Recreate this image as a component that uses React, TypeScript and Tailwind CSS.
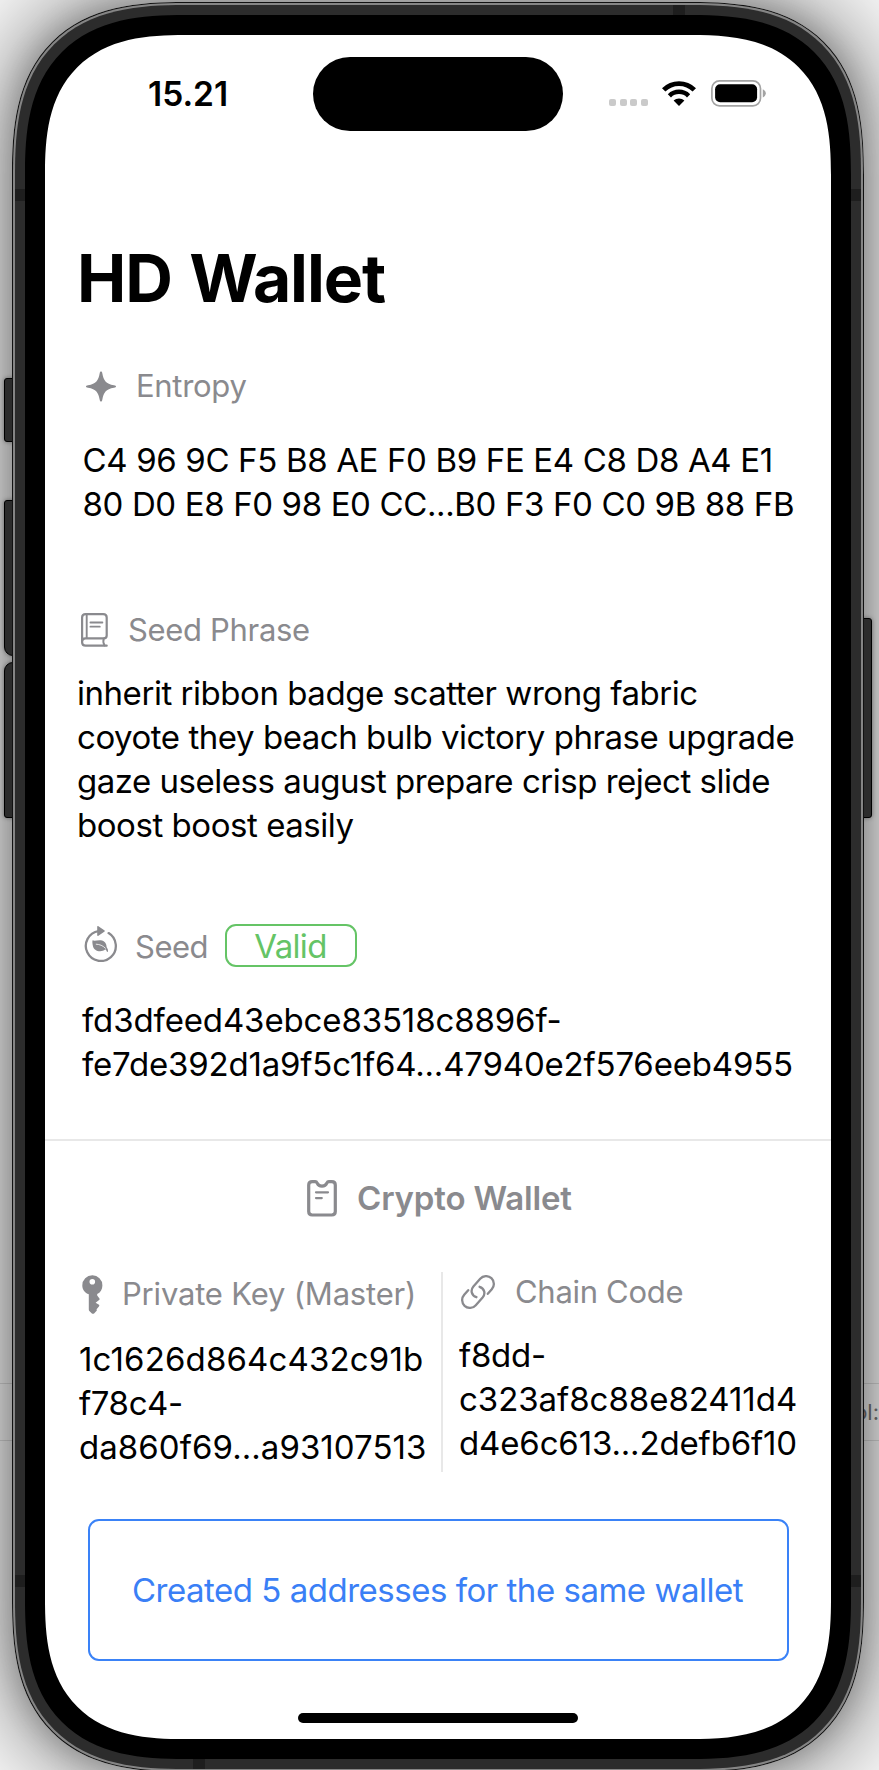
import type { ReactNode } from "react";

function Line({ children, track }: { children: ReactNode; track: string }) {
  return <span className={`block whitespace-nowrap ${track}`}>{children}</span>;
}

function SparkleIcon() {
  return (
    <svg className="h-[31px] w-[30px] shrink-0" viewBox="0 0 30 31" fill="currentColor">
      <path d="M15 0.4C15.8 0.4 16.1 1 16.3 2.2C17.6 9.2 19.8 12.9 28 14.2C29.4 14.5 30 14.8 30 15.5C30 16.2 29.4 16.6 28 16.8C19.8 18.1 17.6 21.8 16.3 28.8C16.1 30 15.8 30.6 15 30.6C14.2 30.6 13.9 30 13.7 28.8C12.4 21.8 10.2 18.1 2 16.8C0.6 16.6 0 16.2 0 15.5C0 14.8 0.6 14.5 2 14.2C10.2 12.9 12.4 9.2 13.7 2.2C13.9 1 14.2 0.4 15 0.4Z" />
    </svg>
  );
}

function BookIcon() {
  return (
    <svg className="h-[34px] w-[27px] shrink-0" viewBox="0 0 27 34" fill="none" stroke="currentColor" strokeWidth="2.2" strokeLinecap="round" strokeLinejoin="round">
      <path d="M1.1 29.2V4.6C1.1 2.2 2.3 1.1 4.6 1.1H22.2C24.6 1.1 25.7 2.2 25.7 4.6V22.6C25.7 24.6 24.8 25.4 22.8 25.4H4.6C2.4 25.4 1.1 26.6 1.1 29.2C1.1 31.6 2.4 32.7 4.6 32.7H25.7" />
      <path d="M5.7 1.4V25M22.8 25.6C22 27.8 22.2 30.2 23.6 32.4" strokeWidth="1.9" />
      <path d="M9.4 9.5H21.4M9.4 13.7H18.8" strokeWidth="1.8" />
    </svg>
  );
}

function SeedIcon() {
  return (
    <svg className="h-[36px] w-[33px] shrink-0" viewBox="0 0 33 36" fill="none">
      <path d="M24.6 7.1A15 15 0 1 1 14.6 5.1" stroke="currentColor" strokeWidth="2.3" strokeLinecap="round" />
      <path d="M13.2 0.8C13.2 0 13.8 -0.1 14.4 0.3L20.3 4.3C20.9 4.7 20.9 5.4 20.3 5.8L14.4 9.8C13.8 10.2 13.2 9.9 13.2 9.2Z" fill="currentColor" />
      <path d="M8.6 14.2C10.4 15.4 13.4 13.9 16.7 14.3C20.7 14.8 22.5 17.6 22.6 21.1C22.9 22.2 24.3 23.2 24 25.2C23.8 26.2 23 26.2 22.7 25.3C22.3 24.2 21.8 23.6 21.2 23.6C17.6 26.4 9.6 26 8.7 18.9C8.5 17.4 8.1 15.7 8.6 14.2Z" fill="currentColor" />
      <path d="M12.2 18.2C15.8 18.4 18.6 19.4 21.4 22.2" stroke="#fff" strokeWidth="0.8" strokeLinecap="round" />
    </svg>
  );
}

function WalletPassIcon() {
  return (
    <svg className="h-[37px] w-[30px] shrink-0" viewBox="0 0 30 37" fill="none" stroke="currentColor" strokeLinecap="round" strokeLinejoin="round">
      <path d="M5.2 1.7H8.2C9.4 1.7 9.8 2.3 10.2 3.1C11 5 12.6 6.2 15 6.2C17.4 6.2 19 5 19.8 3.1C20.2 2.3 20.6 1.7 21.8 1.7H24.8C27.2 1.7 28.3 2.8 28.3 5V31.6C28.3 33.8 27.2 35 24.8 35H5.2C2.8 35 1.7 33.8 1.7 31.6V5C1.7 2.8 2.8 1.7 5.2 1.7Z" strokeWidth="3.2" />
      <path d="M9 12.3H21M9 18.1H14.8" strokeWidth="2.2" />
    </svg>
  );
}

function KeyIcon() {
  return (
    <svg className="h-[39px] w-[21px] shrink-0" viewBox="0 0 21 39" fill="currentColor">
      <path fillRule="evenodd" d="M10.3 0.3A10 10 0 0 1 20.4 10.4C20.4 14.4 18.4 17.4 15.2 19.1L15.2 20.4L17.3 23.2C17.8 23.9 17.7 24.5 17.1 25.1L13.6 27.8L17 29.8C17.5 30.4 17.4 31 16.9 31.6L14.6 34.2L14.8 35.2C14.8 35.6 14.7 35.8 14.4 36.1L12.1 38.5C11.4 39 10.6 39 9.9 38.4L7.6 36.2C7 35.7 6.8 35.2 6.8 34.4V19.3C3 17.8 0.3 14.6 0.3 10.4A10 10 0 0 1 10.3 0.3ZM10.3 4A2.8 2.8 0 1 0 10.3 9.6A2.8 2.8 0 1 0 10.3 4Z" />
    </svg>
  );
}

function LinkIcon() {
  return (
    <svg className="h-[34px] w-[34px] shrink-0" viewBox="0 0 34 34" fill="none" stroke="currentColor" strokeWidth="2.3" strokeLinecap="round">
      <path d="M15.4 22.2C10.4 20.6 9.2 15.2 12.4 11.4L19.2 3.8C22.2 0.4 27.2 0.3 30.4 3.2C33.6 6.3 33.6 11 30.8 14.2L26.8 18.8" />
      <path d="M18.6 11.8C23.6 13.4 24.8 18.8 21.6 22.6L14.8 30.2C11.8 33.6 6.8 33.7 3.6 30.8C0.4 27.7 0.4 23 3.2 19.8L7.2 15.2" />
    </svg>
  );
}

function WifiIcon() {
  return (
    <svg className="mt-[24px] ml-[14px] h-[25px] w-[34px] shrink-0" viewBox="0 0 34 25" fill="none" stroke="#000">
      <path d="M1.7 8.9A21.7 21.7 0 0 1 32.3 8.9" strokeWidth="4.8" />
      <path d="M7.4 14.8A13.6 13.6 0 0 1 26.6 14.8" strokeWidth="4.5" />
      <path d="M17 25L11.6 19.5C14.6 16.7 19.4 16.7 22.4 19.5Z" fill="#000" stroke="none" />
    </svg>
  );
}

function BatteryIcon() {
  return (
    <svg className="mt-[23px] ml-[15px] h-[27px] w-[55px] shrink-0" viewBox="0 0 55 27">
      <rect x="0.9" y="0.9" width="48.6" height="25" rx="7.6" fill="none" stroke="#a3a3a3" strokeWidth="1.7" />
      <rect x="4.1" y="4.2" width="42" height="18" rx="5" fill="#000" />
      <path d="M51.8 9.2C53.6 9.9 54.8 11.5 54.8 13.3C54.8 15.1 53.6 16.8 51.8 17.5Z" fill="#a3a3a3" />
    </svg>
  );
}

const sideButton = "absolute border border-black bg-[#2c2c2c] shadow-[0_0_4px_rgba(0,0,0,0.4)]";

export default function App() {
  return (
    <div className="relative h-[1770px] w-[879px] overflow-hidden bg-[#fafafa] font-['Inter','Liberation_Sans',sans-serif] text-[33px] leading-[44px] text-black">
      <div className="absolute top-[1383px] left-0 flex h-[58px] w-full items-center justify-end border-y border-[#dcdcdc]">
        <span className="text-[22px] leading-[28px] text-[#777]">ol:</span>
      </div>
      <div className="absolute top-[2px] left-[12px] h-[1770px] w-[852px] rounded-[173px] shadow-[0_0_90px_16px_rgba(0,0,0,0.44),0_0_30px_2px_rgba(0,0,0,0.22)] [corner-shape:superellipse(1.4)]" />
      <div className={`${sideButton} top-[378px] left-[4px] h-[64px] w-[12px] rounded-l-[3px]`} />
      <div className={`${sideButton} top-[500px] left-[4px] h-[156px] w-[12px] rounded-tl-[3px] rounded-bl-[9px]`} />
      <div className={`${sideButton} top-[662px] left-[4px] h-[156px] w-[12px] rounded-tl-[9px] rounded-bl-[3px]`} />
      <div className={`${sideButton} top-[618px] left-[861px] h-[200px] w-[11px] rounded-r-[3px]`} />

      <div className="absolute top-[2px] left-[12px] h-[1770px] w-[852px] rounded-[173px] bg-[#111] p-px [corner-shape:superellipse(1.4)]">
        <div className="h-full rounded-[172px] bg-[#858585] p-[2px] [corner-shape:superellipse(1.4)]">
          <div className="relative h-full overflow-hidden rounded-[170px] bg-[#2c2c2c] p-[10px] [corner-shape:superellipse(1.4)]">
            <div className="absolute top-[184px] left-0 h-[12px] w-full bg-[#1e1e1e]" />
            <div className="absolute top-[1570px] left-0 h-[12px] w-full bg-[#1e1e1e]" />
            <div className="absolute top-0 left-[658px] h-[12px] w-[12px] bg-[#1e1e1e]" />
            <div className="absolute bottom-0 left-[178px] h-[12px] w-[12px] bg-[#1e1e1e]" />
            <div className="relative h-full rounded-[160px] bg-black p-[20px] [corner-shape:superellipse(1.4)]">
              <main className="flex h-full flex-col overflow-hidden rounded-[140px] bg-white [corner-shape:superellipse(1.4)]">
                <header className="flex h-[118px] shrink-0 items-start pt-[22px]">
                  <time className="mt-[15px] ml-[103px] w-[165px] text-[33.5px] font-semibold">15.21</time>
                  <div className="h-[74px] w-[250px] rounded-full bg-black" />
                  <div className="mt-[42px] ml-[46px] flex gap-[3.67px]">
                    <i className="size-[7px] rounded-[2px] bg-[#cacaca]" />
                    <i className="size-[7px] rounded-[2px] bg-[#cacaca]" />
                    <i className="size-[7px] rounded-[2px] bg-[#cacaca]" />
                    <i className="size-[7px] rounded-[2px] bg-[#cacaca]" />
                  </div>
                  <WifiIcon />
                  <BatteryIcon />
                </header>

                <h1 className="mt-[85px] pl-[32px] text-[66px] leading-[80px] font-bold tracking-[-1.1px] [word-spacing:3px]">HD Wallet</h1>

                <section>
                  <h2 className="mt-[48px] flex items-center gap-[20px] pl-[41px] text-[31px] leading-[40px] tracking-[-0.3px] text-[#8a8a8e]">
                    <SparkleIcon />
                    Entropy
                  </h2>
                  <p className="mt-[32px] pl-[37.5px]">
                    <Line track="tracking-[-0.35px]">C4 96 9C F5 B8 AE F0 B9 FE E4 C8 D8 A4 E1</Line>
                    <Line track="tracking-[-0.37px]">80 D0 E8 F0 98 E0 CC...B0 F3 F0 C0 9B 88 FB</Line>
                  </p>
                </section>

                <section>
                  <h2 className="mt-[84px] flex items-center gap-[20px] pl-[36px] text-[31px] leading-[40px] tracking-[-0.33px] text-[#8a8a8e]">
                    <BookIcon />
                    Seed Phrase
                  </h2>
                  <p className="mt-[21px] pl-[32px]">
                    <Line track="tracking-[-0.46px]">inherit ribbon badge scatter wrong fabric</Line>
                    <Line track="tracking-[-0.46px]">coyote they beach bulb victory phrase upgrade</Line>
                    <Line track="tracking-[-0.49px]">gaze useless august prepare crisp reject slide</Line>
                    <Line track="tracking-[-0.45px]">boost boost easily</Line>
                  </p>
                </section>

                <section>
                  <div className="mt-[77px] flex items-start pl-[39px] text-[#8a8a8e]">
                    <span className="mt-[2px]">
                      <SeedIcon />
                    </span>
                    <h2 className="mt-[3px] ml-[18px] w-[90px] text-[31px] leading-[40px] tracking-[-0.5px]">Seed</h2>
                    <span className="h-[43px] w-[132px] rounded-[11px] border-2 border-[#65c466] pr-px text-center leading-[40px] tracking-[-0.7px] text-[#65c466]">Valid</span>
                  </div>
                  <p className="mt-[31px] pl-[37px]">
                    <Line track="tracking-[-0.13px]">fd3dfeed43ebce83518c8896f-</Line>
                    <Line track="tracking-[-0.19px]">fe7de392d1a9f5c1f64...47940e2f576eeb4955</Line>
                  </p>
                </section>

                <hr className="mt-[53px] h-[2px] shrink-0 border-0 bg-[#e8e8e8]" />

                <h2 className="mt-[35px] flex items-center gap-[20px] pl-[262px] font-semibold tracking-[-0.16px] text-[#8a8a8e]">
                  <WalletPassIcon />
                  Crypto Wallet
                </h2>

                <div className="mt-[52px] flex h-[200px] shrink-0">
                  <section className="w-[396px] pt-[2px]">
                    <h3 className="flex items-center gap-[19px] pl-[37px] text-[31px] leading-[40px] tracking-[-0.19px] text-[#8a8a8e]">
                      <KeyIcon />
                      Private Key (Master)
                    </h3>
                    <p className="mt-[23px] pl-[34px]">
                      <Line track="tracking-[0.15px]">1c1626d864c432c91b</Line>
                      <Line track="tracking-[-0.4px]">f78c4-</Line>
                      <Line track="tracking-[0.05px]">da860f69...a93107513</Line>
                    </p>
                  </section>
                  <section className="flex-1 border-l-2 border-[#e8e8e8]">
                    <h3 className="flex items-center gap-[20px] pl-[18px] text-[31px] leading-[40px] tracking-[-0.3px] text-[#8a8a8e]">
                      <LinkIcon />
                      Chain Code
                    </h3>
                    <p className="mt-[21px] pl-[16px]">
                      <Line track="tracking-[-0.26px]">f8dd-</Line>
                      <Line track="tracking-[-0.04px]">c323af8c88e82411d4</Line>
                      <Line track="tracking-[-0.15px]">d4e6c613...2defb6f10</Line>
                    </p>
                  </section>
                </div>

                <button className="mt-[47px] ml-[43px] h-[142px] w-[701px] shrink-0 rounded-[11px] border-2 border-[#3a82f7] pr-[2px] tracking-[-0.48px] whitespace-nowrap text-[#3a7ff6]">
                  Created 5 addresses for the same wallet
                </button>
                <div className="mt-[52px] ml-[253px] h-[10px] w-[280px] shrink-0 rounded-full bg-black" />
              </main>
            </div>
          </div>
        </div>
      </div>
    </div>
  );
}
